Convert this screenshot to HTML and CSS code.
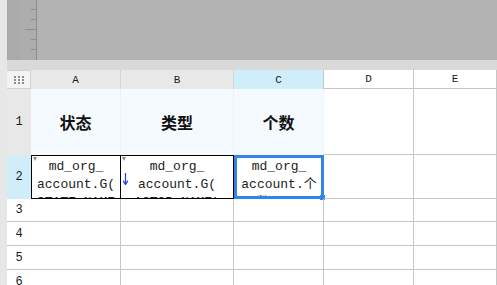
FILE: index.html
```html
<!DOCTYPE html>
<html lang="zh">
<head>
    <meta charset="UTF-8">
    <title>Sheet</title>
    <link rel="stylesheet" href="styles.css">
</head>
<body>
    <div class="side"></div>
    <div class="main">
        <div class="canvas">
            <div class="ruler-pad"></div>
            <div class="ruler">
                <span class="tick"></span>
                <span class="tick"></span>
                <span class="tick long"></span>
                <span class="tick"></span>
                <span class="tick"></span>
            </div>
        </div>
        <div class="band"></div>

        <div class="sheet">
            <!-- header row -->
            <div class="corner">
                <svg width="10" height="8" viewBox="0 0 10 8">
                    <rect x="0" y="0" width="2" height="2"/><rect x="4" y="0" width="2" height="2"/><rect x="8" y="0" width="2" height="2"/>
                    <rect x="0" y="3" width="2" height="2"/><rect x="4" y="3" width="2" height="2"/><rect x="8" y="3" width="2" height="2"/>
                    <rect x="0" y="6" width="2" height="2"/><rect x="4" y="6" width="2" height="2"/><rect x="8" y="6" width="2" height="2"/>
                </svg>
            </div>
            <div class="colhead">A</div>
            <div class="colhead">B</div>
            <div class="colhead active">C</div>
            <div class="colhead blank">D</div>
            <div class="colhead blank last">E</div>

            <!-- row 1 -->
            <div class="rowhead">1</div>
            <div class="cell title">状态</div>
            <div class="cell title">类型</div>
            <div class="cell title">个数</div>
            <div class="cell"></div>
            <div class="cell"></div>

            <!-- row 2 -->
            <div class="rowhead active">2</div>
            <div class="cell field first">
                <span class="mark"></span>
                md_org_<br>account.G(<br>STATE_NAME
            </div>
            <div class="cell field">
                <span class="mark"></span>
                <svg class="drop" width="5" height="12" viewBox="0 0 5 12"><path d="M2.5 0V11M0 7.5L2.5 11.5L5 7.5" fill="none" stroke="#1d3cf0" stroke-width="1.2"/></svg>
                md_org_<br>account.G(<br>ACTOR_NAME)
            </div>
            <div class="cell selected">
                <div class="clip">md_org_<br>account.个<br>数(ID)</div>
                <span class="handle"></span>
            </div>
            <div class="cell"></div>
            <div class="cell"></div>

            <!-- rows 3-6 -->
            <div class="rowhead plain">3</div>
            <div class="cell"></div><div class="cell"></div><div class="cell"></div><div class="cell"></div><div class="cell"></div>
            <div class="rowhead plain">4</div>
            <div class="cell"></div><div class="cell"></div><div class="cell"></div><div class="cell"></div><div class="cell"></div>
            <div class="rowhead plain">5</div>
            <div class="cell"></div><div class="cell"></div><div class="cell"></div><div class="cell"></div><div class="cell"></div>
            <div class="rowhead plain">6</div>
            <div class="cell"></div><div class="cell"></div><div class="cell"></div><div class="cell"></div><div class="cell"></div>
        </div>
    </div>
</body>
</html>
```

FILE: styles.css
```css
/* Reset */
* {
    margin: 0;
    padding: 0;
    box-sizing: border-box;
}

body {
    display: flex;
    width: 497px;
    height: 285px;
    overflow: hidden;
    background-color: #ffffff;
    font-family: 'Liberation Mono', 'DejaVu Sans Mono', monospace;
    color: #1a1a1a;
}

.side {
    width: 7px;
    flex-shrink: 0;
    background-color: #e7e7e7;
}

.main {
    flex: 1;
    display: flex;
    flex-direction: column;
    min-width: 0;
}

/* Grey canvas with ruler */
.canvas {
    height: 60px;
    flex-shrink: 0;
    display: flex;
    background-color: #b3b3b3;
}

.ruler-pad {
    width: 13px;
    background-color: #aaaaaa;
}

.ruler {
    width: 17px;
    background-color: #adadad;
    border-right: 1px solid #8c8c8c;
    display: flex;
    flex-direction: column;
    align-items: flex-end;
    padding-top: 9px;
    gap: 9px;
}

.tick {
    display: block;
    width: 5px;
    height: 1px;
    background-color: #8e8e8e;
}

.tick.long {
    width: 11px;
}

.band {
    height: 10px;
    flex-shrink: 0;
    background-color: #d9d9d9;
}

/* Sheet grid */
.sheet {
    flex-shrink: 0;
    display: grid;
    grid-template-columns: 24px 90px 113px 90px 90px 83px;
    grid-template-rows: 19px 66px 44px 23px 24px 24px 24px;
}

.corner {
    background-color: #f3f3f3;
    border: 1px solid #d2d2d2;
    border-left: none;
    display: flex;
    align-items: center;
    justify-content: center;
}

.corner svg {
    fill: #8e8e8e;
}

.colhead {
    background-color: #e8e8e8;
    border-right: 1px solid #d4d4d4;
    font-size: 11px;
    display: flex;
    align-items: center;
    justify-content: center;
}

.colhead.active {
    background-color: #d0eefa;
    border-right-color: #c6c6c6;
}

.colhead.blank {
    background-color: #ffffff;
    border-right-color: #c6c6c6;
    border-bottom: 1px solid #c6c6c6;
}

.rowhead {
    background-color: #e8e8e8;
    font-size: 12px;
    display: flex;
    align-items: center;
    justify-content: center;
}

.rowhead.active {
    background-color: #d0eefa;
}

.rowhead.plain {
    background-color: #ffffff;
    border-bottom: 1px solid #c6c6c6;
}

.cell {
    position: relative;
    border-right: 1px solid #c6c6c6;
    border-bottom: 1px solid #c6c6c6;
    overflow: hidden;
}

.cell.title {
    background-color: #f5fafe;
    border-right-color: #eef3f7;
    border-bottom: none;
    font-family: 'Noto Sans CJK SC', sans-serif;
    font-weight: 700;
    font-size: 16px;
    display: flex;
    align-items: center;
    justify-content: center;
    color: #111111;
}

.cell.field,
.cell.selected .clip {
    font-size: 13px;
    line-height: 18px;
    text-align: center;
    font-family: 'Liberation Mono', 'Noto Sans CJK SC', monospace;
    color: #222222;
}

.cell.field {
    border: 1px solid #000000;
    border-left: none;
    padding-top: 2px;
}

.cell.field.first {
    border-left: 1px solid #000000;
}

.cell.selected {
    overflow: visible;
    border: 3px solid #3183ee;
}

.clip {
    height: 100%;
    overflow: hidden;
}

.mark {
    position: absolute;
    left: 1px;
    top: 1px;
    width: 0;
    height: 0;
    border-left: 2px solid transparent;
    border-right: 2px solid transparent;
    border-top: 4px solid #8a8a8a;
}

.drop {
    position: absolute;
    left: 2px;
    top: 17px;
}

.handle {
    position: absolute;
    right: -4px;
    bottom: -4px;
    width: 5px;
    height: 5px;
    background-color: #3183ee;
}
```
